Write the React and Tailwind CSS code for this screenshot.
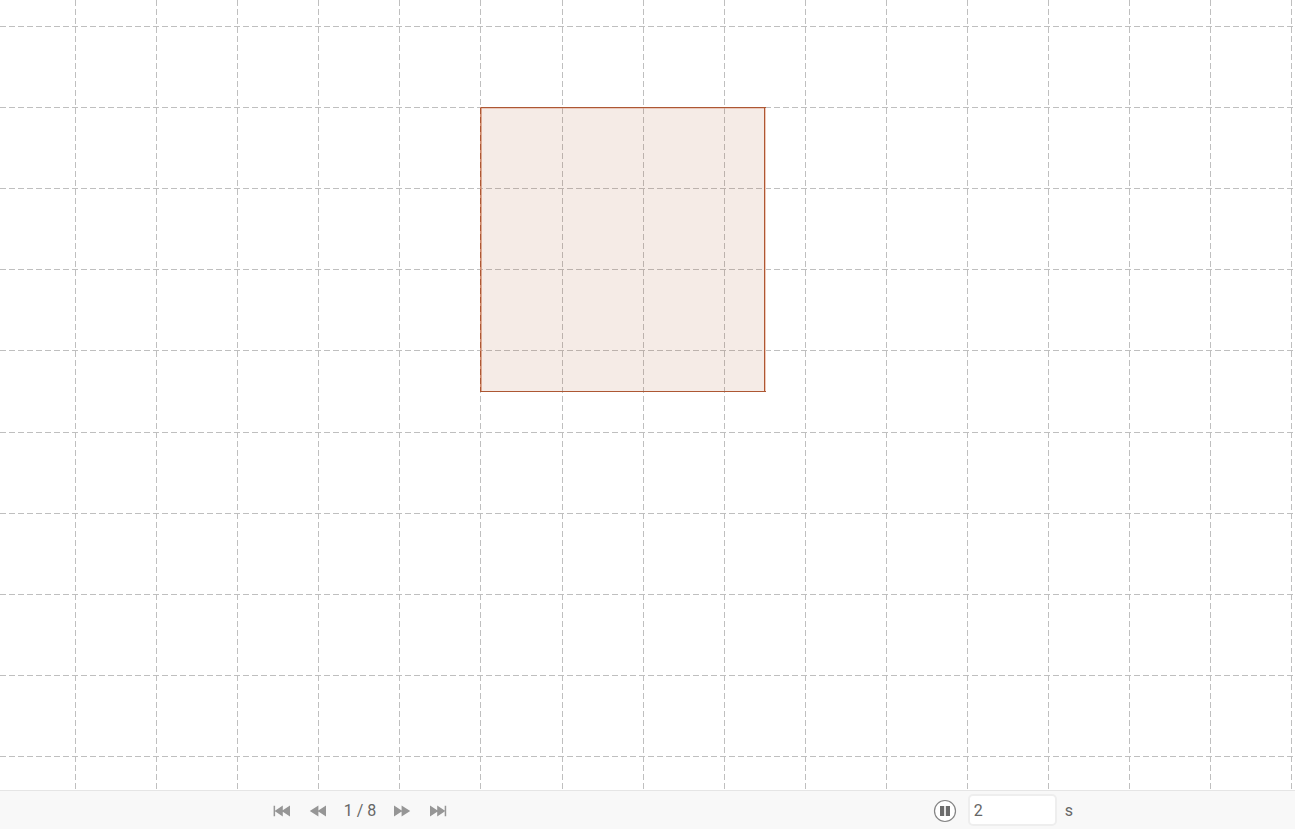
import { useState } from "react";

const COLUMNS = [75, 156, 237, 318, 399, 480, 562, 643, 724, 805, 886, 967, 1048, 1129, 1210, 1291];
const ROWS = [26, 107, 188, 269, 350, 432, 513, 594, 675, 756];

function Board() {
  return (
    <svg className="block min-h-0 w-full flex-1" shapeRendering="crispEdges" role="img" aria-label="Square on a grid">
      <g stroke="#bfbfbf" strokeWidth="1" strokeDasharray="6 3">
        {ROWS.map((y) => (
          <line key={y} x1="0" x2="1294" y1={y + 0.5} y2={y + 0.5} />
        ))}
        {COLUMNS.map((x) => (
          <line key={x} x1={x + 0.5} x2={x + 0.5} y1="0" y2="789" />
        ))}
      </g>
      <rect x="480" y="107" width="285" height="285" fill="#ac5733" fillOpacity="0.12" />
      <rect x="481" y="108" width="284" height="1" fill="#e0a48e" fillOpacity="0.5" />
      <rect x="481" y="108" width="1" height="283" fill="#d08a6c" fillOpacity="0.7" />
      <rect x="765" y="107" width="1" height="285" fill="#f0c8b8" />
      <path d="M480 107.5H766M764.5 107V391M480 391.5H766" stroke="#ad5733" fill="none" />
      <path d="M480.5 107V392" stroke="#d08a6c" />
      <path d="M480.5 108V392" stroke="#ad5733" strokeDasharray="6 3" />
    </svg>
  );
}

function Control({ label, children }) {
  return (
    <button type="button" aria-label={label} className="flex h-6 w-9 items-center justify-center text-[#969696]">
      <svg width="18" height="12" viewBox="0 0 18 12" fill="currentColor" aria-hidden="true">{children}</svg>
    </button>
  );
}

export default function App() {
  const [delay, setDelay] = useState("2");
  return (
    <div className="h-screen bg-white pr-px pb-px font-['Roboto',sans-serif] text-base text-[#666666]">
      <main className="flex h-full flex-col">
        <Board />
        <footer className="grid h-[39px] shrink-0 grid-cols-[720fr_575fr] border-t border-[#e5e5e5] bg-[#f8f8f8] pt-0.5">
          <nav aria-label="Steps" className="flex items-center justify-center">
            <Control label="First step">
              <path d="M.6 .8h1.500v10.400H.6zM9.800 .6v10.800L1.600 6zM17 .6v10.800L8.600 6z" />
            </Control>
            <Control label="Previous step">
              <path d="M9.400 .6v10.800L.8 6zM17 .6v10.800L8.600 6z" />
            </Control>
            <span className="w-12 text-center">1 / 8</span>
            <Control label="Next step">
              <path d="M1 .6v10.800L9.400 6zM8.600 .6v10.800L17.200 6z" />
            </Control>
            <Control label="Last step">
              <path d="M1 .6v10.800L9.400 6zM8.200 .6v10.800L16.400 6zM15.700 .8h1.500v10.400h-1.500z" />
            </Control>
          </nav>
          <div className="flex items-center justify-center pr-[9px]">
            <button type="button" aria-label="Pause" className="mr-[11px]">
              <svg width="24" height="24" viewBox="0 0 24 24" aria-hidden="true">
                <circle cx="12" cy="12" r="10.500" fill="#fff" stroke="#858585" strokeWidth="1.200" />
                <path d="M7 7h4.200v10H7zM12.800 7H17v10h-4.200z" fill="#6b6b6b" />
              </svg>
            </button>
            <input
              id="delay"
              aria-label="Seconds per step"
              value={delay}
              onChange={(e) => setDelay(e.target.value)}
              className="mb-0.5 h-8 w-[89px] rounded-[5px] border-2 border-[#eeeeee] bg-white px-1 outline-none"
            />
            <label htmlFor="delay" className="ml-2">s</label>
          </div>
        </footer>
      </main>
    </div>
  );
}
